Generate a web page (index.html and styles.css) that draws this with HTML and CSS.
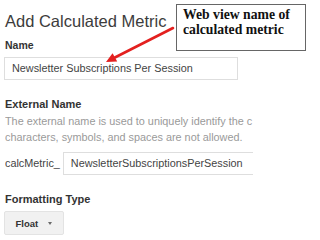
FILE: index.html
```html
<!DOCTYPE html>
<html>
<head>
<meta charset="utf-8">
<link rel="stylesheet" href="styles.css">
</head>
<body>
<div class="page">
  <h1 class="title">Add Calculated Metric</h1>
  <div class="label label-first">Name</div>
  <div class="textbox name-box">Newsletter Subscriptions Per Session</div>

  <div class="label label-section">External Name</div>
  <div class="clip">
    <div class="help">
      <span class="help-line">The external name is used to uniquely identify the c</span>
      <span class="help-line">characters, symbols, and spaces are not allowed.</span>
    </div>
    <div class="calc-row">
      <span class="prefix">calcMetric_</span>
      <div class="textbox ext-box">NewsletterSubscriptionsPerSession</div>
    </div>
  </div>

  <div class="label label-section">Formatting Type</div>
  <div class="dropdown">
    <span class="dropdown-text">Float</span>
    <span class="caret"></span>
  </div>

  <svg class="arrow" width="310" height="240" viewBox="0 0 310 240">
    <line x1="173" y1="28" x2="114.9" y2="57.5" stroke="#e3201f" stroke-width="2.6" stroke-linecap="round"/>
    <polygon points="106,62 117.2,61.6 112.6,53.2" fill="#e3201f"/>
  </svg>
  <div class="callout">Web view name of<br>calculated metric</div>
</div>
</body>
</html>
```
FILE: styles.css
```css
html, body {
  margin: 0;
  padding: 0;
  background: #fff;
}

.page {
  position: relative;
  width: 310px;
  height: 240px;
  overflow: hidden;
  padding-left: 5px;
  box-sizing: border-box;
  font-family: "Liberation Sans", Arial, sans-serif;
  color: #333;
}

.title {
  margin: 11px 0 0;
  font-size: 16.5px;
  font-weight: normal;
  line-height: 20px;
  color: #3c3c3c;
}

.label {
  font-weight: bold;
  line-height: 14px;
  color: #333;
}

.label-first {
  margin-top: 7px;
  font-size: 10.5px;
}

.label-section {
  margin-top: 17px;
  font-size: 11px;
}

.textbox {
  box-sizing: border-box;
  height: 23px;
  border: 1px solid #dedede;
  padding-left: 7px;
  font-size: 10.85px;
  line-height: 21px;
  color: #444;
  white-space: nowrap;
  background: #fff;
}

.name-box {
  margin: 5px 0 0 -1px;
  width: 234px;
}

.clip {
  width: 248px;
  overflow: hidden;
}

.help {
  margin-top: 2px;
  font-size: 10.85px;
  line-height: 16px;
  color: #9a9a9a;
}

.help-line {
  display: block;
  white-space: nowrap;
}

.calc-row {
  display: flex;
  align-items: center;
  margin-top: 7px;
}

.prefix {
  font-size: 10.85px;
  color: #444;
  white-space: nowrap;
  margin-bottom: 2px;
}

.ext-box {
  flex-shrink: 0;
  width: 260px;
  margin-left: 3px;
}

.dropdown {
  display: flex;
  align-items: center;
  box-sizing: border-box;
  width: 60px;
  height: 24px;
  margin: 5px 0 0 -1px;
  padding-left: 10.5px;
  background: #f1f1f1;
  border: 1px solid #e3e3e3;
  border-radius: 2px;
}

.dropdown-text {
  font-size: 9.5px;
  font-weight: bold;
  color: #333;
}

.caret {
  width: 0;
  height: 0;
  margin-left: 10px;
  margin-top: 1px;
  border-left: 2.5px solid transparent;
  border-right: 2.5px solid transparent;
  border-top: 3px solid #6a6a6a;
}

.arrow {
  position: absolute;
  left: 0;
  top: 0;
  pointer-events: none;
}

.callout {
  position: absolute;
  left: 176px;
  top: 4px;
  width: 130px;
  height: 47px;
  box-sizing: border-box;
  border: 1.5px solid #666;
  background: #fff;
  padding: 1.5px 0 0 6px;
  font-family: "Liberation Serif", "Times New Roman", serif;
  font-weight: bold;
  font-size: 13.7px;
  line-height: 15.5px;
  color: #111;
}
```
